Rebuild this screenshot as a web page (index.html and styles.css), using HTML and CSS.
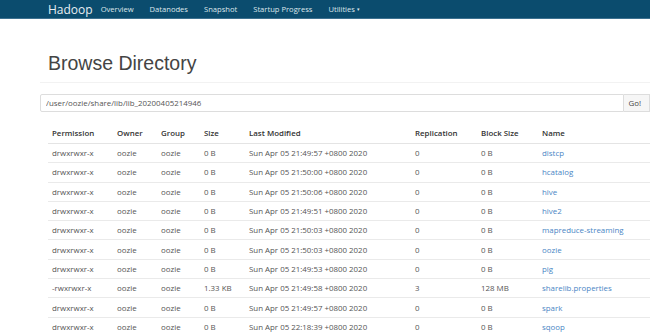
FILE: index.html
```html
<!DOCTYPE html>
<html lang="en">
<head>
    <meta charset="UTF-8">
    <title>Browsing HDFS</title>
    <link rel="stylesheet" href="styles.css">
</head>
<body>
    <nav class="navbar">
        <span class="brand">Hadoop</span>
        <a href="#">Overview</a>
        <a href="#">Datanodes</a>
        <a href="#">Snapshot</a>
        <a href="#">Startup Progress</a>
        <a href="#">Utilities <span class="caret">&#9662;</span></a>
    </nav>

    <div class="page-header">
        <h1>Browse Directory</h1>
    </div>

    <div class="input-group">
        <input type="text" class="path" value="/user/oozie/share/lib/lib_20200405214946">
        <button class="go">Go!</button>
    </div>

    <table class="listing">
        <thead>
            <tr>
                <th class="c-perm">Permission</th>
                <th class="c-owner">Owner</th>
                <th class="c-group">Group</th>
                <th class="c-size">Size</th>
                <th class="c-mod">Last Modified</th>
                <th class="c-rep">Replication</th>
                <th class="c-block">Block Size</th>
                <th>Name</th>
            </tr>
        </thead>
        <tbody>
            <tr><td>drwxrwxr-x</td><td>oozie</td><td>oozie</td><td>0 B</td><td>Sun Apr 05 21:49:57 +0800 2020</td><td>0</td><td>0 B</td><td><a href="#">distcp</a></td></tr>
            <tr><td>drwxrwxr-x</td><td>oozie</td><td>oozie</td><td>0 B</td><td>Sun Apr 05 21:50:00 +0800 2020</td><td>0</td><td>0 B</td><td><a href="#">hcatalog</a></td></tr>
            <tr><td>drwxrwxr-x</td><td>oozie</td><td>oozie</td><td>0 B</td><td>Sun Apr 05 21:50:06 +0800 2020</td><td>0</td><td>0 B</td><td><a href="#">hive</a></td></tr>
            <tr><td>drwxrwxr-x</td><td>oozie</td><td>oozie</td><td>0 B</td><td>Sun Apr 05 21:49:51 +0800 2020</td><td>0</td><td>0 B</td><td><a href="#">hive2</a></td></tr>
            <tr><td>drwxrwxr-x</td><td>oozie</td><td>oozie</td><td>0 B</td><td>Sun Apr 05 21:50:03 +0800 2020</td><td>0</td><td>0 B</td><td><a href="#">mapreduce-streaming</a></td></tr>
            <tr><td>drwxrwxr-x</td><td>oozie</td><td>oozie</td><td>0 B</td><td>Sun Apr 05 21:50:03 +0800 2020</td><td>0</td><td>0 B</td><td><a href="#">oozie</a></td></tr>
            <tr><td>drwxrwxr-x</td><td>oozie</td><td>oozie</td><td>0 B</td><td>Sun Apr 05 21:49:53 +0800 2020</td><td>0</td><td>0 B</td><td><a href="#">pig</a></td></tr>
            <tr><td>-rwxrwxr-x</td><td>oozie</td><td>oozie</td><td>1.33 KB</td><td>Sun Apr 05 21:49:58 +0800 2020</td><td>3</td><td>128 MB</td><td><a href="#">sharelib.properties</a></td></tr>
            <tr><td>drwxrwxr-x</td><td>oozie</td><td>oozie</td><td>0 B</td><td>Sun Apr 05 21:49:57 +0800 2020</td><td>0</td><td>0 B</td><td><a href="#">spark</a></td></tr>
            <tr><td>drwxrwxr-x</td><td>oozie</td><td>oozie</td><td>0 B</td><td>Sun Apr 05 22:18:39 +0800 2020</td><td>0</td><td>0 B</td><td><a href="#">sqoop</a></td></tr>
        </tbody>
    </table>
</body>
</html>
```

FILE: styles.css
```css
html, body {
    overflow: hidden;
}

body {
    margin: 0;
    font-family: "Open Sans", "Noto Sans", sans-serif;
    font-size: 7.9px;
    color: #555;
    background-color: #fff;
}

.navbar {
    display: flex;
    align-items: center;
    height: 18px;
    padding-left: 48px;
    background-color: #0b4c6e; /* Hadoop dark teal */
    border-bottom: 1px solid #3d7190;
}

.navbar .brand {
    font-size: 12px;
    color: #e8eef2;
    margin-right: 8px;
}

.navbar a {
    color: #dde6ec;
    text-decoration: none;
    font-size: 7.6px;
    margin-right: 16px;
}

.navbar .caret {
    font-size: 5px;
    vertical-align: 1px;
}

.page-header {
    margin: 0 0 0 40px;
    padding: 0 0 0 8px;
    height: 63px;
    border-bottom: 1px solid #f2f2f2;
}

.page-header h1 {
    margin: 0;
    padding-top: 32px;
    font-family: "Liberation Sans", Arial, sans-serif;
    font-size: 19.5px;
    font-weight: normal;
    line-height: 24px;
    color: #444;
}

.input-group {
    display: flex;
    margin: 11px 0 0 40px;
    height: 18px;
}

.path {
    width: 597px;
    box-sizing: border-box;
    height: 18px;
    padding: 0 5px;
    border: 1px solid #ddd;
    border-radius: 2px 0 0 2px;
    font-family: inherit;
    font-size: 7.9px;
    color: #555;
    outline: none;
}

.go {
    flex-shrink: 0;
    height: 18px;
    padding: 0 8px 0 4px;
    border: 1px solid #ddd;
    border-left: none;
    background-color: #f6f6f6;
    font-family: inherit;
    font-size: 7.9px;
    color: #444;
}

.listing {
    margin: 11px 0 0 48px;
    width: 620px;
    border-collapse: collapse;
}

.listing th,
.listing td {
    text-align: left;
    padding: 0 4px;
    height: 18.3px;
    white-space: nowrap;
    border-top: 1px solid #eaeaea;
}

.listing th {
    height: 20px;
    font-weight: 600;
    color: #333;
    border-top: none;
    border-bottom: 1px solid #e4e4e4;
}

.listing a {
    color: #4a86c5;
    text-decoration: none;
}

.c-perm { width: 57px; }
.c-owner { width: 36px; }
.c-group { width: 35px; }
.c-size { width: 37px; }
.c-mod { width: 158px; }
.c-rep { width: 58px; }
.c-block { width: 53px; }
```
